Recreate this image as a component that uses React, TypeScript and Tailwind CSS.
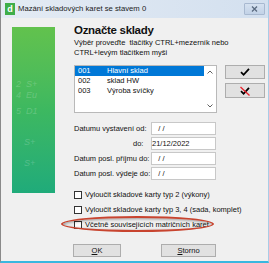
import React from "react";

const font = { fontFamily: '"Liberation Sans", Arial, sans-serif' };

function CheckIcon({ cross }: { cross?: boolean }) {
  return (
    <svg width="12" height="10" viewBox="0 0 12 10">
      <path d="M2 5.2 L4.6 7.8 L10 1.8" stroke="#000" strokeWidth="1.8" fill="none" />
      {cross && <path d="M1.5 1 L10.5 9.5" stroke="#e8202a" strokeWidth="1.3" fill="none" />}
    </svg>
  );
}

function Chevron({ up }: { up?: boolean }) {
  return (
    <svg width="6" height="4" viewBox="0 0 6 4">
      <path d={up ? "M0.5 3.5 L3 1 L5.5 3.5" : "M0.5 0.5 L3 3 L5.5 0.5"} stroke="#606060" strokeWidth="1" fill="none" />
    </svg>
  );
}

function DateRow({ label, value, labelClass }: { label: string; value: string; labelClass?: string }) {
  return (
    <div className="flex items-center h-[13px]">
      <div className={"w-[77px] text-[7.5px] text-[#111] whitespace-nowrap " + (labelClass || "")}>{label}</div>
      <div className="w-[65px] h-[13px] bg-white border border-[#c8c8c8] flex items-center text-[7.5px] text-[#111]">
        {value}
      </div>
    </div>
  );
}

function CheckRow({ label }: { label: string }) {
  return (
    <div className="flex items-center h-[15px]">
      <div className="w-[8px] h-[8px] border border-[#333] bg-white shrink-0" />
      <div className="ml-[3px] text-[7.5px] text-[#111] whitespace-nowrap">{label}</div>
    </div>
  );
}

export default function App() {
  return (
    <div
      className="w-[269px] h-[263px] bg-[#f0f0f0] relative overflow-hidden border-l border-l-[#8a8a8a] border-r border-r-[#a9cbe6] border-b-2 border-b-[#3ab7df]"
      style={font}
    >
      {/* Title bar */}
      <div className="h-[18px] flex items-center bg-gradient-to-r from-[#e4ebf4] to-[#d3e0ef] relative">
        <div className="ml-[4px] w-[10px] h-[12px] bg-[#3fae4a] flex items-center justify-center text-white text-[9px] font-bold leading-none">
          d
        </div>
        <div className="ml-[3px] text-[7.7px] text-[#1a1a1a] whitespace-nowrap">Mazání skladových karet se stavem 0</div>
        <div className="absolute right-[3px] top-[3px] w-[21px] h-[12px] border border-[#a8b9d0] bg-gradient-to-b from-[#d5e1f0] to-[#c2d2e7] flex items-center justify-center rounded-[1px]">
          <svg width="7" height="6" viewBox="0 0 7 6">
            <path d="M1 0.5 L6 5.5 M6 0.5 L1 5.5" stroke="#5a6b80" strokeWidth="1.3" />
          </svg>
        </div>
      </div>

      {/* Body */}
      <div className="flex pt-[6px] pl-[11px]">
        {/* Green panel */}
        <div className="mt-[3px] w-[43px] h-[166px] shrink-0 bg-gradient-to-b from-[#62c24d] via-[#3db860] to-[#1fab7a] relative overflow-hidden">
          <div className="absolute left-[4px] top-[52px] text-white/20 italic text-[9px] leading-[11px] whitespace-nowrap">
            <div>2 &nbsp;S+</div>
            <div>4 &nbsp;Eu</div>
            <div className="mt-[5px]">5 &nbsp;D1</div>
            <div className="mt-[20px] ml-[8px]">S+</div>
            <div className="mt-[10px] ml-[8px]">S+</div>
          </div>
        </div>

        {/* Content column */}
        <div className="ml-[19px] w-[143px] flex flex-col shrink-0">
          <div className="text-[11.5px] leading-[13px] font-bold tracking-[-0.3px] text-[#111]">Označte sklady</div>
          <div className="mt-[1px] text-[7.5px] leading-[10px] text-[#111] whitespace-nowrap">
            <div>Výběr proveďte&nbsp; tlačítky CTRL+mezerník nebo</div>
            <div>CTRL+levým tlačítkem myši</div>
          </div>

          {/* List */}
          <div className="mt-[7px] h-[48px] bg-white border border-[#b9b9b9] flex">
            <div className="flex-1 pt-0 text-[7.5px] text-[#111]">
              <div className="h-[10px] flex items-center bg-[#0078d7] text-white">
                <span className="w-[32px] pl-[3px]">001</span>
                <span>Hlavní sklad</span>
              </div>
              <div className="h-[10px] flex items-center">
                <span className="w-[32px] pl-[3px]">002</span>
                <span>sklad HW</span>
              </div>
              <div className="h-[10px] flex items-center">
                <span className="w-[32px] pl-[3px]">003</span>
                <span>Výroba svíčky</span>
              </div>
            </div>
            <div className="w-[12px] flex flex-col items-center justify-between pt-[4px] pb-[4px]">
              <Chevron up />
              <Chevron />
            </div>
          </div>

          {/* Dates */}
          <div className="mt-[9px] flex flex-col gap-[2px]">
            <DateRow label="Datumu vystavení od:" value={"\u00a0\u00a0\u00a0/ /"} />
            <DateRow label="do:" value={"21/12/2022"} labelClass="pl-[59px]" />
            <DateRow label="Datum posl. příjmu do:" value={"\u00a0\u00a0\u00a0/ /"} />
            <DateRow label="Datum posl. výdeje do:" value={"\u00a0\u00a0\u00a0/ /"} />
          </div>

          {/* Checkboxes */}
          <div className="mt-[7px] flex flex-col">
            <CheckRow label="Vyloučit skladové karty typ 2 (výkony)" />
            <CheckRow label="Vyloučit skladové karty typ 3, 4 (sada, komplet)" />
            <CheckRow label="Včetně souvisejících matričních karet" />
          </div>

          {/* Buttons */}
          <div className="mt-[12px] flex">
            <div className="w-[48px] h-[13px] ml-[-1px] bg-[#e1e1e1] border border-[#adadad] flex items-center justify-center text-[7.5px] text-[#111]">
              <span className="underline">O</span>K
            </div>
            <div className="ml-[40px] w-[55px] h-[13px] bg-[#e1e1e1] border border-[#adadad] flex items-center justify-center text-[7.5px] text-[#111]">
              <span className="underline">S</span>torno
            </div>
          </div>
        </div>

        {/* Right buttons */}
        <div className="ml-[8px] pt-[41px] flex flex-col gap-[4px]">
          <div className="w-[40px] h-[14px] bg-[#e1e1e1] border border-[#adadad] flex items-center justify-center">
            <CheckIcon />
          </div>
          <div className="w-[40px] h-[15px] bg-[#e1e1e1] border border-[#adadad] flex items-center justify-center">
            <CheckIcon cross />
          </div>
        </div>
      </div>

      {/* Red ellipse highlight */}
      <div className="absolute left-[60px] top-[216px] w-[153px] h-[16px] rounded-[50%] border-2 border-[#c8442f] shadow-[inset_1px_1px_3px_rgba(0,0,0,0.35)]" />
    </div>
  );
}
